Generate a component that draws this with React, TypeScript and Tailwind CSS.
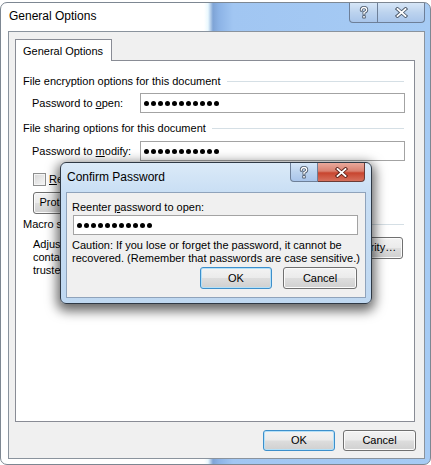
import type { ReactNode } from 'react'

const FONT = "font-['Liberation_Sans',Arial,sans-serif]"

const BTN =
  'flex items-center justify-center rounded-[3px] border bg-[linear-gradient(180deg,#f3f3f3_0%,#ebebeb_48%,#dddddd_52%,#d0d0d0_100%)] text-[11px] text-black'

function Dots() {
  return (
    <div className="flex items-center gap-[2px]">
      {Array.from({ length: 11 }).map((_, i) => (
        <span key={i} className="h-[5px] w-[5px] rounded-full bg-black" />
      ))}
    </div>
  )
}

function PasswordBox({ width }: { width: string }) {
  return (
    <div className={`flex h-[20px] items-center border border-[#a3a3a3] bg-white pl-[3px] ${width}`}>
      <Dots />
    </div>
  )
}

function GroupHeader({ children }: { children: ReactNode }) {
  return (
    <div className="flex h-[14px] items-center pl-[7px] pr-[10px]">
      <span className="whitespace-nowrap text-[11px]">{children}</span>
      <div className="ml-[6px] h-px flex-1 bg-[#d5dfe5]" />
    </div>
  )
}

function Button({ label, isDefault, width }: { label: ReactNode; isDefault?: boolean; width: string }) {
  return (
    <div
      className={`${BTN} ${width} ${
        isDefault
          ? 'border-[#3c8fcb] shadow-[inset_0_0_0_1px_#b4e0f8]'
          : 'border-[#707070] shadow-[inset_0_0_0_1px_#fbfbfb]'
      }`}
    >
      {label}
    </div>
  )
}

function HelpGlyph() {
  return (
    <svg width="10" height="13" viewBox="0 0 10 13">
      <path d="M2.3 4.2 Q2.3 1.5 5 1.5 Q7.7 1.5 7.7 4 Q7.7 5.6 5 6.6 L5 8" fill="none" stroke="#4b5869" strokeWidth="3" strokeLinecap="round" />
      <rect x="3.3" y="9.2" width="3.4" height="3.2" rx="0.6" fill="#4b5869" />
      <path d="M2.3 4.2 Q2.3 1.5 5 1.5 Q7.7 1.5 7.7 4 Q7.7 5.6 5 6.6 L5 8" fill="none" stroke="#fff" strokeWidth="1.3" strokeLinecap="round" />
      <rect x="4.2" y="10" width="1.6" height="1.6" fill="#fff" />
    </svg>
  )
}

function CloseGlyph({ outline }: { outline: string }) {
  return (
    <svg width="13" height="11" viewBox="0 0 13 11">
      <path d="M2.5 2 L10.5 9 M10.5 2 L2.5 9" stroke={outline} strokeWidth="3.6" strokeLinecap="square" />
      <path d="M2.5 2 L10.5 9 M10.5 2 L2.5 9" stroke="#fff" strokeWidth="1.8" strokeLinecap="square" />
    </svg>
  )
}

function CaptionButtons({ red }: { red?: boolean }) {
  return (
    <div className="flex self-start">
      <div
        className={`flex items-center justify-center rounded-bl-[4px] border border-t-0 border-[#6d7f98] bg-[linear-gradient(180deg,#d6e6f7_0%,#bcd3ee_50%,#a9c5ea_100%)] ${
          red ? 'h-[19px] w-[28px]' : 'h-[20px] w-[29px]'
        }`}
      >
        <HelpGlyph />
      </div>
      <div
        className={`flex items-center justify-center rounded-br-[4px] border border-l-0 border-t-0 ${
          red
            ? 'h-[19px] w-[47px] border-[#6b3b36] bg-[linear-gradient(180deg,#e9a99c_0%,#d98170_45%,#c8452f_55%,#d6705c_100%)]'
            : 'h-[20px] w-[47px] border-[#6d7f98] bg-[linear-gradient(180deg,#d6e6f7_0%,#bcd3ee_50%,#a9c5ea_100%)]'
        }`}
      >
        <CloseGlyph outline={red ? '#5a1f17' : '#4b5869'} />
      </div>
    </div>
  )
}

function ConfirmPassword() {
  return (
    <div className="absolute left-[60px] top-[162px] flex h-[142px] w-[312px] flex-col rounded-[6px] border border-[#2f3945] bg-[linear-gradient(180deg,#dbeaf8_0%,#c8def4_22%,#bfd8f1_100%)] px-[5px] pb-[5px] shadow-[0_4px_12px_3px_rgba(0,0,0,0.6)]">
      <div className="flex h-[29px] justify-between pr-[1px]">
        <span className="self-center pb-px pl-[1px] text-[12px]">Confirm Password</span>
        <CaptionButtons red />
      </div>
      <div className="flex flex-1 flex-col border border-[#8fa3bb] bg-[#f0f0f0]">
        <div className="mt-[7px] flex h-[14px] items-center pl-[5px] text-[11px]">
          Reenter&nbsp;<span className="underline">p</span>assword to open:
        </div>
        <div className="ml-[6px] mt-px">
          <PasswordBox width="w-[285px]" />
        </div>
        <p className="mt-[4px] whitespace-nowrap pl-[5px] text-[11px] leading-[13px]">
          Caution: If you lose or forget the password, it cannot be
          <br />
          recovered. (Remember that passwords are case sensitive.)
        </p>
        <div className="mt-[2px] flex justify-end gap-[11px] pr-[8px]">
          <Button label="OK" isDefault width="h-[22px] w-[72px]" />
          <Button label="Cancel" width="h-[22px] w-[74px]" />
        </div>
      </div>
    </div>
  )
}

export default function App() {
  return (
    <div className={`relative h-[465px] w-[431px] overflow-hidden bg-white text-black ${FONT}`}>
      <div className="mt-[2px] flex h-[463px] w-[431px] flex-col rounded-[7px] border border-[#7d8792] bg-[linear-gradient(90deg,#ffffff_0px,#ffffff_203px,#eaf8fe_207px,#7fa4d6_212px,#8cb3e6_218px,#a1c6f2_232px,#a6cbf4_100%)] pb-[5px] pl-[7px] pr-[5px]">
        {/* Title bar */}
        <div className="flex h-[28px] justify-between">
          <span className="self-center pb-[2px] pl-px text-[12px]">General Options</span>
          <CaptionButtons />
        </div>

        {/* Client area */}
        <div className="flex flex-1 flex-col border border-[#8a939d] bg-[#f0f0f0] pl-[6px] pt-[7px]">
          <div className="relative z-10 -mb-px flex h-[22px] w-[97px] items-center border border-b-0 border-[#898c95] bg-white pl-[7px] pt-[2px] text-[11px]">
            General Options
          </div>
          <div className="flex h-[362px] w-[400px] flex-col border border-[#898c95] bg-white">
            <div className="mt-[13px]">
              <GroupHeader>File encryption options for this document</GroupHeader>
            </div>
            <div className="mt-[5px] flex items-center pl-[16px]">
              <span className="w-[108px] text-[11px]">
                Password to <span className="underline">o</span>pen:
              </span>
              <PasswordBox width="w-[265px]" />
            </div>
            <div className="mt-[8px]">
              <GroupHeader>File sharing options for this document</GroupHeader>
            </div>
            <div className="mt-[6px] flex items-center pl-[16px]">
              <span className="w-[108px] text-[11px]">
                Password to <span className="underline">m</span>odify:
              </span>
              <PasswordBox width="w-[265px]" />
            </div>
            <div className="mt-[10px] flex items-center pl-[17px]">
              <span className="h-[13px] w-[13px] border border-[#8e8f8f] bg-[linear-gradient(135deg,#d6d6d6_0%,#f6f6f6_100%)] shadow-[inset_0_0_0_1px_#f4f4f4]" />
              <span className="ml-[3px] text-[11px]">
                <span className="underline">R</span>ead-only recommended
              </span>
            </div>
            <div className="mt-[4px] pl-[17px]">
              <Button label="Protect Document…" width="h-[22px] w-[112px]" />
            </div>
            <div className="mt-[4px]">
              <GroupHeader>Macro security</GroupHeader>
            </div>
            <div className="mt-[6px] flex items-start justify-between pl-[17px] pr-[11px]">
              <p className="whitespace-nowrap text-[11px] leading-[13px]">
                Adjust the security level for opening files that
                <br />
                contain macro viruses, and specify the names of
                <br />
                trusted macro developers.
              </p>
              <div className="mt-[-1px]">
                <Button label="Macro Security…" width="h-[22px] w-[98px]" />
              </div>
            </div>
          </div>
          <div className="mt-[8px] flex justify-end gap-[8px] pr-[8px]">
            <Button label="OK" isDefault width="h-[21px] w-[72px]" />
            <Button label="Cancel" width="h-[21px] w-[73px]" />
          </div>
        </div>
      </div>
      <ConfirmPassword />
    </div>
  )
}
